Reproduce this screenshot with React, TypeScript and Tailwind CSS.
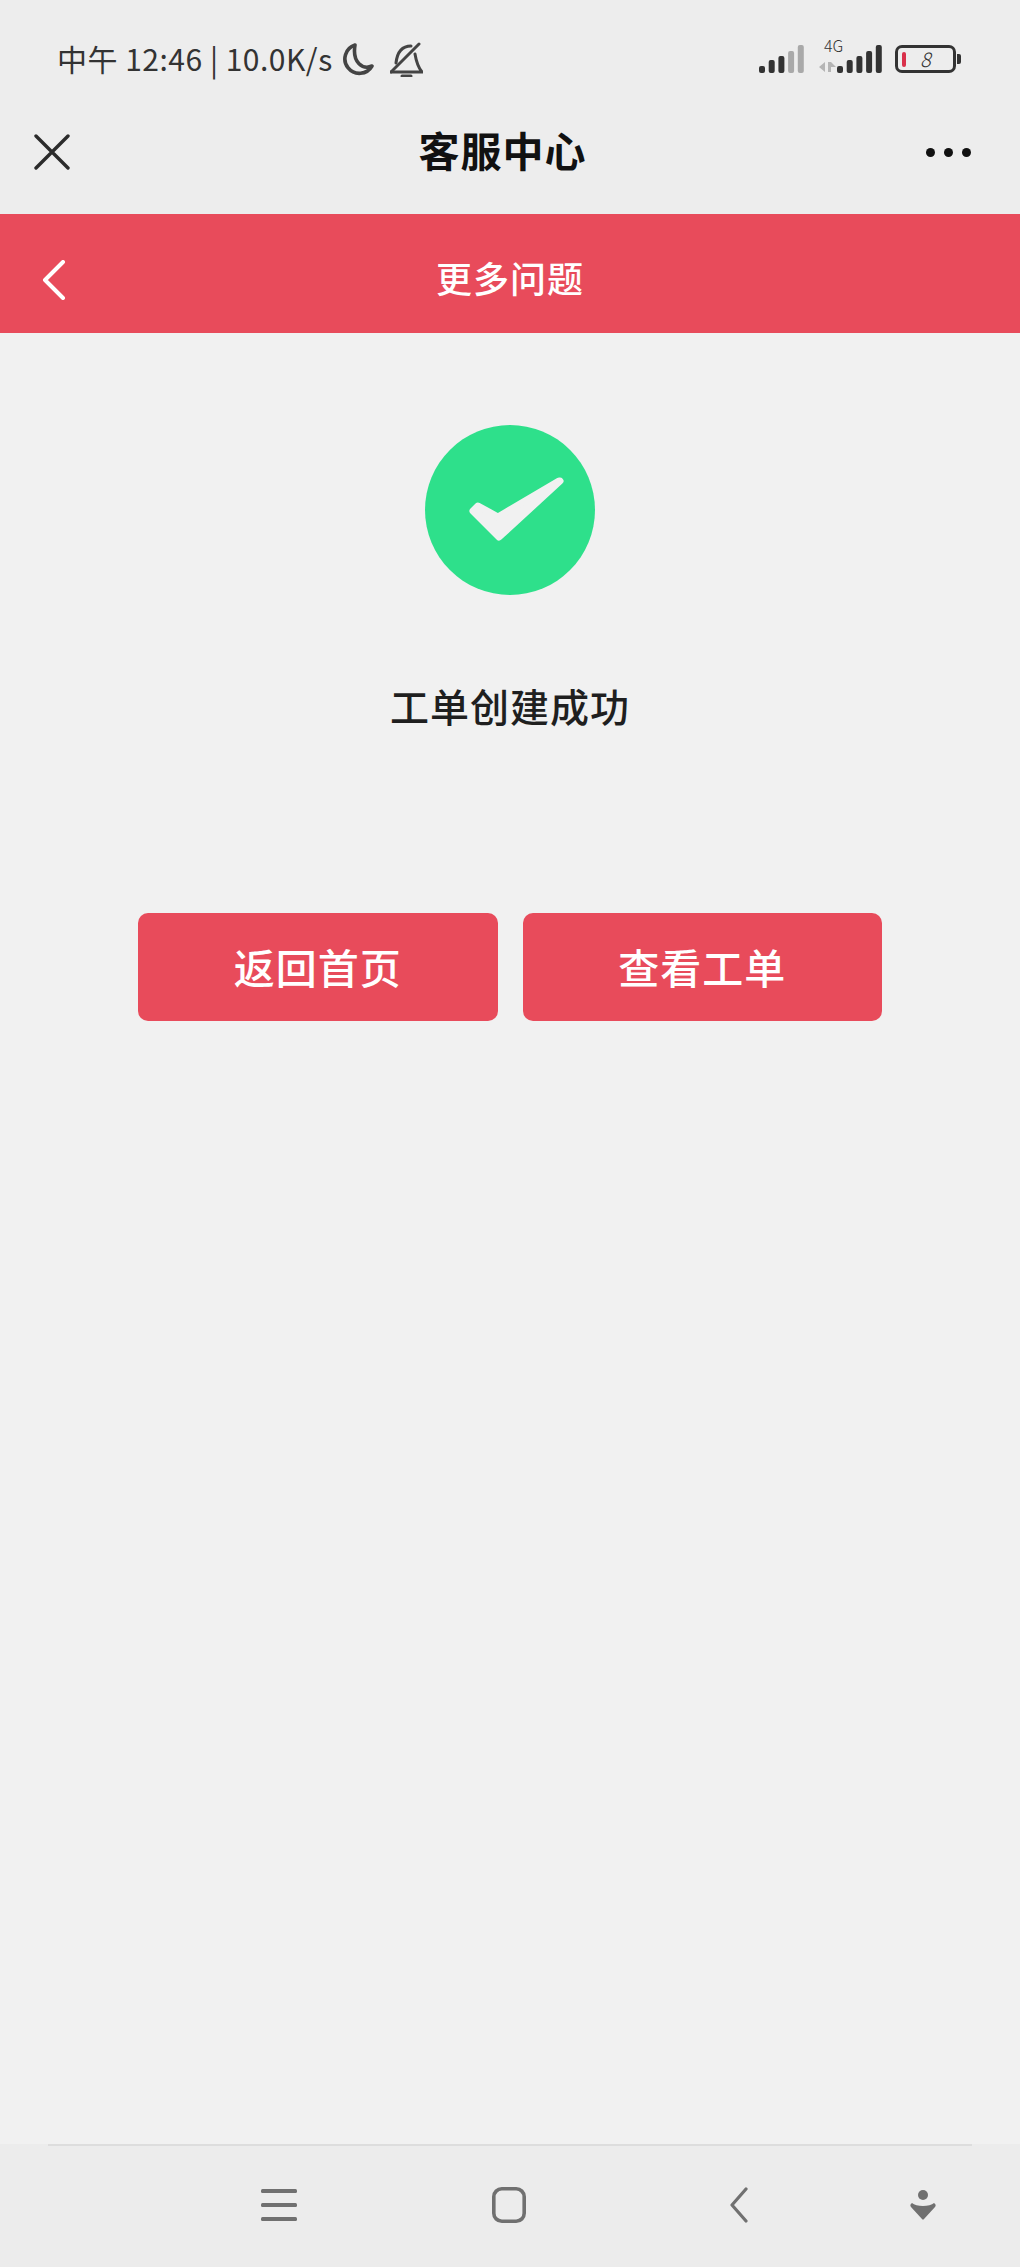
import React from 'react';

const cjk = { fontFamily: '"Noto Sans CJK SC", "Noto Sans", sans-serif' };

function SignalBars({ color = '#333333', dim = 0 }: { color?: string; dim?: number }) {
  const bars = [
    { x: 0, y: 21 },
    { x: 9.7, y: 15 },
    { x: 19.4, y: 11 },
    { x: 29.1, y: 6 },
    { x: 38.8, y: 0 },
  ];
  return (
    <svg width="45" height="28" viewBox="0 0 45 28" className="block">
      {bars.map((b, i) => (
        <rect
          key={i}
          x={b.x}
          y={b.y}
          width="6"
          height={28 - b.y}
          rx="2"
          fill={i >= 5 - dim ? '#a9a9a9' : color}
        />
      ))}
    </svg>
  );
}

export default function App() {
  return (
    <div className="w-[1020px] h-[2267px] flex flex-col bg-[#f1f1f1] overflow-hidden" style={cjk}>
      {/* status bar */}
      <div className="h-[118px] shrink-0 bg-[#ededed] flex items-center justify-between pl-[57px] pr-[59px]">
        <div className="flex items-center text-[#333333]">
          <span className="text-[30px] leading-none tracking-[0.5px] w-[285px] whitespace-pre -mt-[3px]">中午 12:46 | 10.0K/s</span>
          <svg width="32" height="33" viewBox="0 0 32 33" fill="none" stroke="#444444" strokeWidth="3.6" className="block">
            <path d="M13 2 A14.5 14.5 0 1 0 30 23 C21 27 10 20 13 2Z" strokeLinejoin="round" />
          </svg>
          <svg width="33" height="35" viewBox="0 0 33 35" fill="none" stroke="#444444" strokeWidth="3" strokeLinecap="round" className="block ml-[16px]">
            <path d="M1 30 L29 2" />
            <path d="M1 30 H32 C27 24 26 18 25 12" />
            <path d="M6 21 C7 12 11 4 21 4" />
            <path d="M12 34 H21" />
          </svg>
        </div>
        <div className="flex items-end">
          <SignalBars dim={2} />
          <div className="relative ml-[33px]">
            <SignalBars />
            <span className="absolute left-[-13px] top-[-8px] text-[16px] leading-none font-light text-[#333333]">4G</span>
            <svg width="17" height="10" viewBox="0 0 17 10" fill="#b5b5b5" className="absolute left-[-18px] bottom-[1px]">
              <path d="M6 0 V10 L0 5Z M9 0 H12 L17 5 L12 5 V10 H9Z" />
            </svg>
          </div>
          <div className="ml-[13px] flex items-center">
            <div className="w-[61px] h-[28px] rounded-[7px] border-[3px] border-[#333333] flex items-center pl-[4px]">
              <div className="w-[4px] h-[15px] rounded-full bg-[#d9304a]" />
              <span className="ml-[14px] text-[20px] leading-none italic font-light text-[#333333]">8</span>
            </div>
            <div className="w-[4px] h-[10px] ml-[1px] rounded-r-[2px] bg-[#333333]" />
          </div>
        </div>
      </div>

      {/* wechat nav */}
      <div className="h-[96px] shrink-0 bg-[#ededed] pb-[28px] pl-[34px] pr-[49px] grid grid-cols-[1fr_auto_1fr] items-center">
        <svg width="36" height="36" viewBox="0 0 36 36" stroke="#2b2b2b" strokeWidth="3.4" strokeLinecap="round" className="block">
          <path d="M2 2 L34 34 M34 2 L2 34" />
        </svg>
        <div className="text-[41px] leading-none font-bold text-[#111111] tracking-[1px] -mt-[5px]">客服中心</div>
        <div className="flex justify-end gap-[9px]">
          <div className="w-[9px] h-[9px] rounded-full bg-[#111111]" />
          <div className="w-[9px] h-[9px] rounded-full bg-[#111111]" />
          <div className="w-[9px] h-[9px] rounded-full bg-[#111111]" />
        </div>
      </div>

      {/* red header */}
      <div className="h-[119px] shrink-0 bg-[#e84b5b] pt-[14px] pl-[42px] pr-[42px] grid grid-cols-[1fr_auto_1fr] items-center">
        <svg width="24" height="40" viewBox="0 0 24 40" fill="none" stroke="#ffffff" strokeWidth="4" strokeLinecap="round" strokeLinejoin="round" className="block -mt-[2px]">
          <path d="M21 2 L3 20 L21 38" />
        </svg>
        <div className="text-[36px] leading-none font-medium text-white tracking-[1px] -mt-[8px]">更多问题</div>
        <div />
      </div>

      {/* result */}
      <div className="flex-1 flex flex-col items-center">
        <div className="mt-[92px] w-[170px] h-[170px] rounded-full bg-[#2ee08b]">
          <svg width="170" height="170" viewBox="0 0 170 170" fill="#f1f1f1" stroke="#f1f1f1" strokeWidth="7" strokeLinejoin="round" className="block">
            <polygon points="48,86 74,112 135,56 134,56 73,92 53,81" />
          </svg>
        </div>
        <div className="mt-[91px] text-[39px] leading-none font-medium text-[#1f1f1f] tracking-[1px]">工单创建成功</div>
        <div className="mt-[188px] w-[744px] flex gap-[25px]">
          <button className="flex-1 h-[108px] rounded-[10px] bg-[#e84b5b] text-white text-[41px] font-medium tracking-[1px]">返回首页</button>
          <button className="flex-1 h-[108px] rounded-[10px] bg-[#e84b5b] text-white text-[41px] font-medium tracking-[1px]">查看工单</button>
        </div>
      </div>

      {/* android nav */}
      <div className="h-[123px] shrink-0 bg-[#ececec] relative">
        <div className="mx-[48px] h-[2px] bg-[#dddddd]" />
        <div className="flex items-center h-[121px] pl-[261px] pb-[3px]">
          <svg width="36" height="32" viewBox="0 0 36 32" fill="#707070" className="block">
            <rect x="0" y="0" width="36" height="4" rx="1.5" />
            <rect x="0" y="14" width="36" height="4" rx="1.5" />
            <rect x="0" y="28" width="36" height="4" rx="1.5" />
          </svg>
          <svg width="34" height="36" viewBox="0 0 34 36" fill="none" stroke="#707070" strokeWidth="3.6" className="block ml-[195px]">
            <rect x="1.8" y="1.8" width="30.4" height="32.4" rx="8" />
          </svg>
          <svg width="18" height="36" viewBox="0 0 18 36" fill="none" stroke="#707070" strokeWidth="3.2" strokeLinecap="round" strokeLinejoin="round" className="block ml-[204px]">
            <path d="M16 2 L2 18 L16 34" />
          </svg>
          <svg width="26" height="30" viewBox="0 0 26 30" fill="#707070" className="block ml-[162px]">
            <ellipse cx="13" cy="5" rx="5" ry="5" />
            <path d="M2 13 C6 17 20 17 24 13 C26 14 26 16 25 17 L14 29 C13 30 13 30 12 29 L1 17 C0 16 0 14 2 13Z" />
          </svg>
        </div>
      </div>
    </div>
  );
}
